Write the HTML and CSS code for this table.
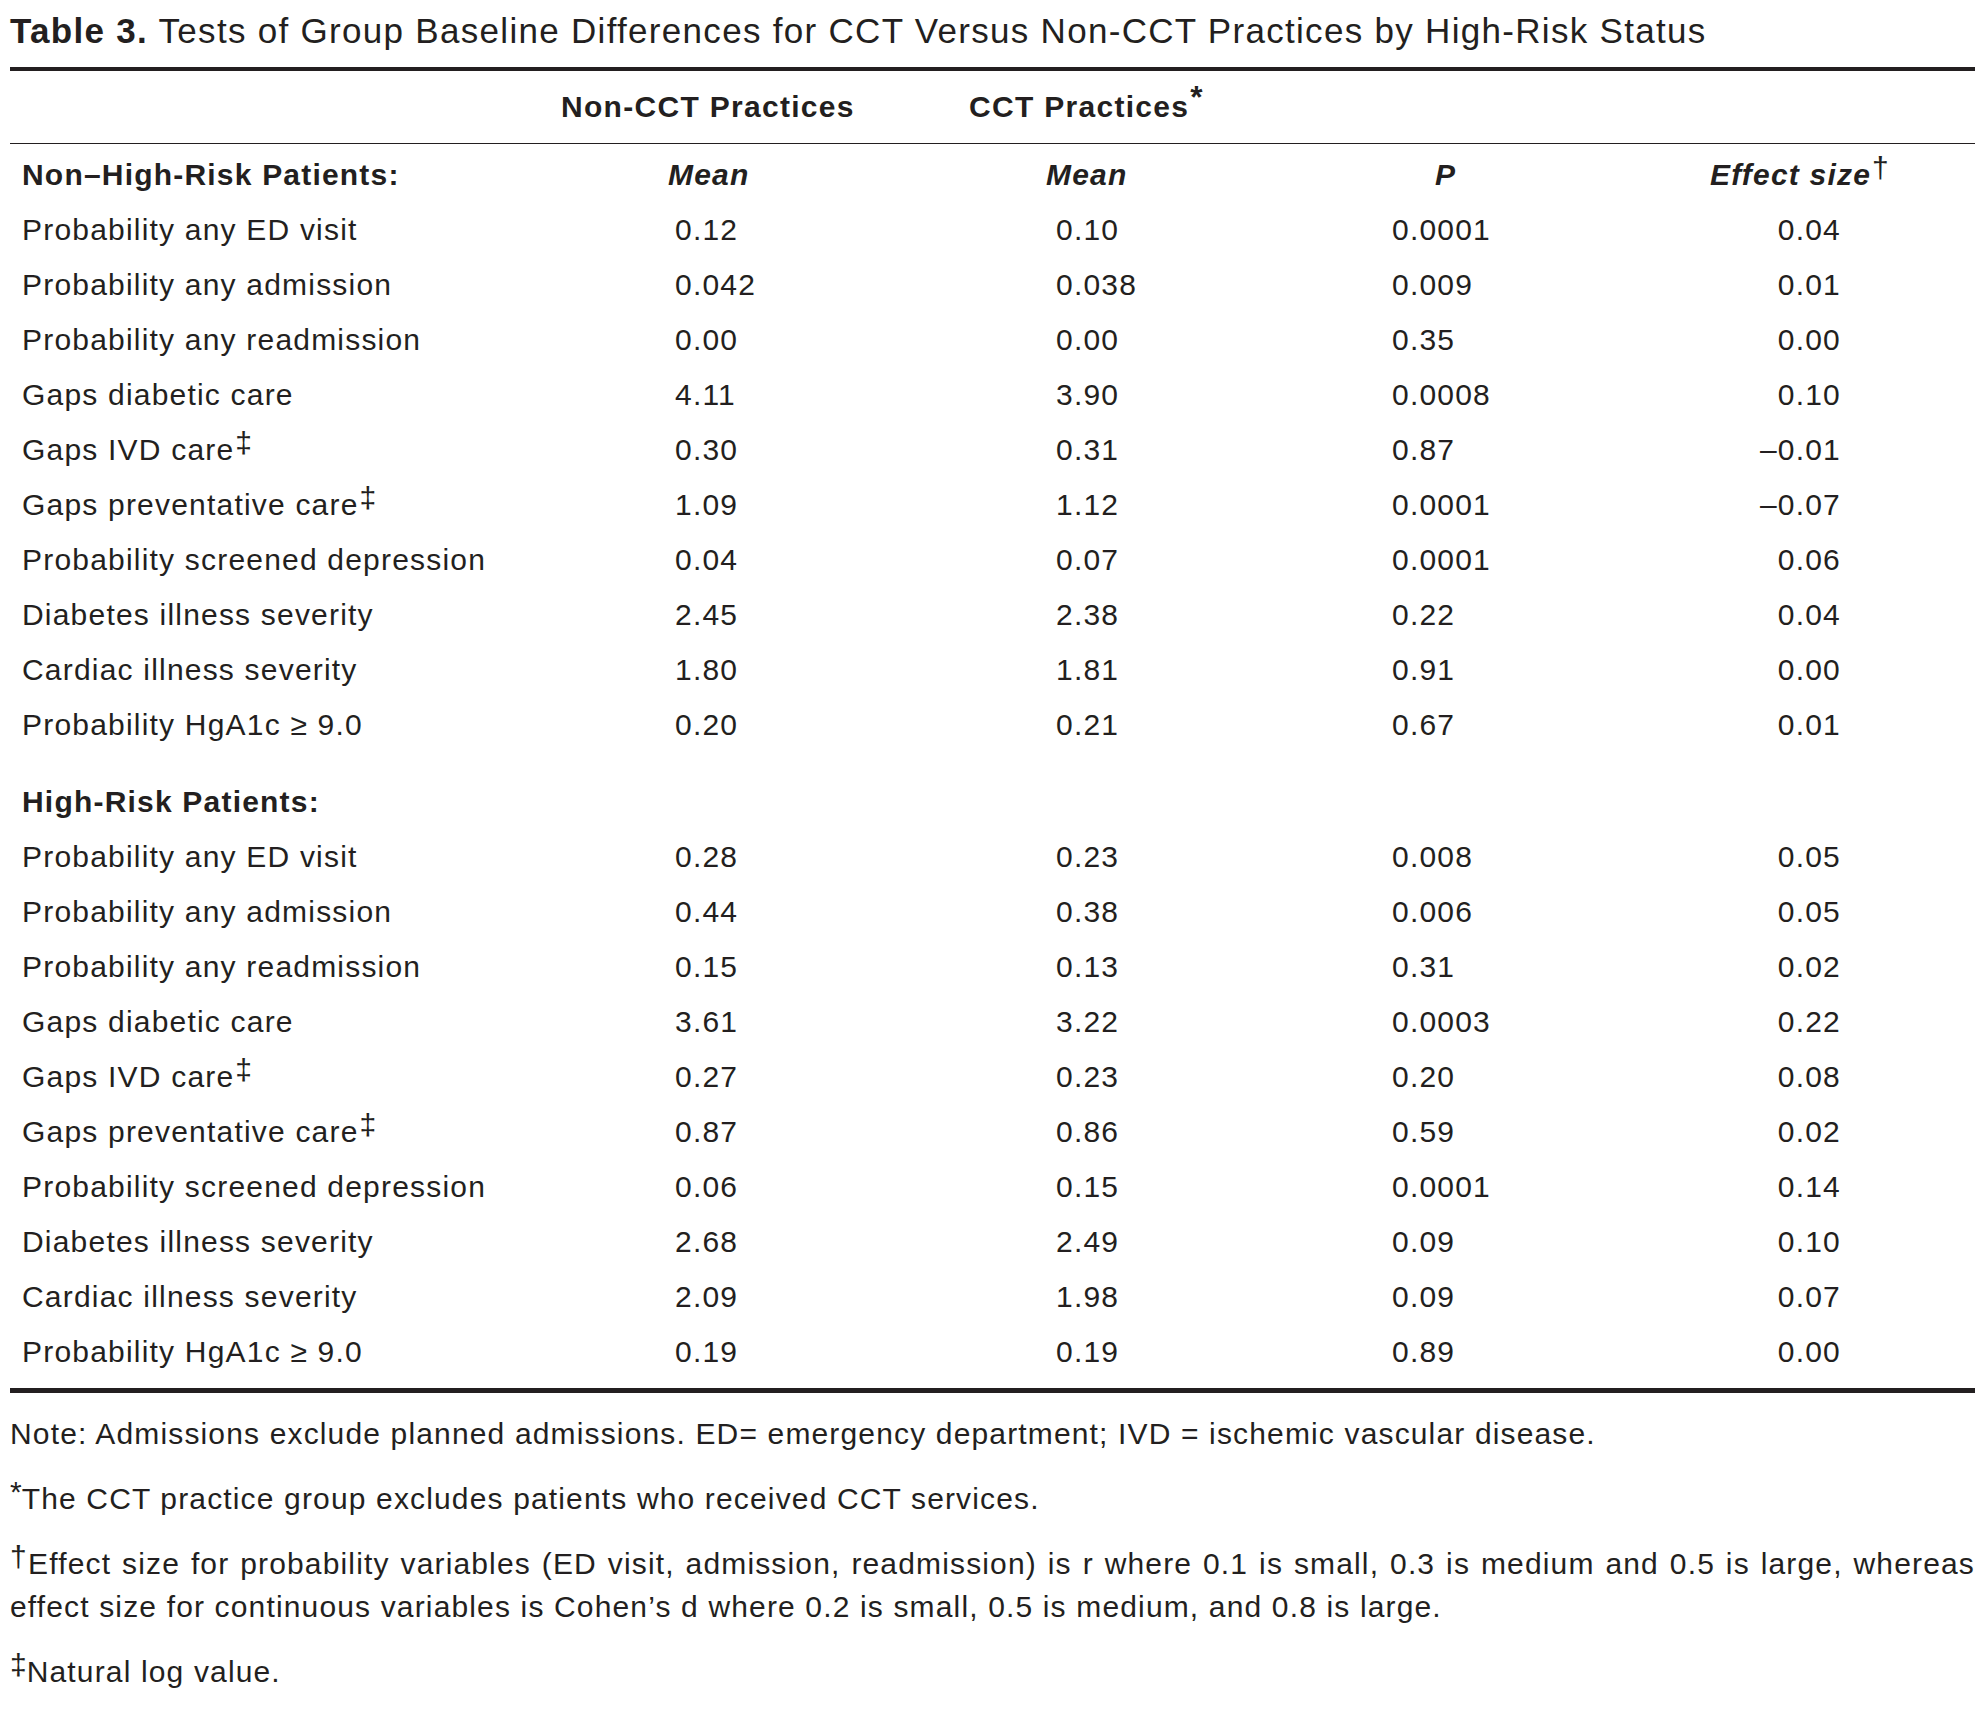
FILE: index.html
```html
<!DOCTYPE html>
<html lang="en">
<head>
<meta charset="utf-8">
<title>Table 3</title>
<link rel="stylesheet" href="styles.css">
</head>
<body>
<div class="page">
  <h1 class="title"><b>Table 3.</b> Tests of Group Baseline Differences for CCT Versus Non-CCT Practices by High-Risk Status</h1>
  <div class="rule-thick"></div>
  <div class="group-head">
    <span class="gh gh1">Non-CCT Practices</span>
    <span class="gh gh2">CCT Practices<span class="sup star">*</span></span>
  </div>
  <div class="rule-thin"></div>

  <div class="row colhead">
    <span class="label sect">Non–High-Risk Patients:</span>
    <span class="h h1">Mean</span>
    <span class="h h2">Mean</span>
    <span class="h h3">P</span>
    <span class="h h4">Effect size<span class="sup dag">†</span></span>
  </div>
  <div class="row"><span class="label">Probability any ED visit</span><span class="v">0.12</span><span class="v">0.10</span><span class="v">0.0001</span><span class="e">0.04</span></div>
  <div class="row"><span class="label">Probability any admission</span><span class="v">0.042</span><span class="v">0.038</span><span class="v">0.009</span><span class="e">0.01</span></div>
  <div class="row"><span class="label">Probability any readmission</span><span class="v">0.00</span><span class="v">0.00</span><span class="v">0.35</span><span class="e">0.00</span></div>
  <div class="row"><span class="label">Gaps diabetic care</span><span class="v">4.11</span><span class="v">3.90</span><span class="v">0.0008</span><span class="e">0.10</span></div>
  <div class="row"><span class="label">Gaps IVD care<span class="sup">‡</span></span><span class="v">0.30</span><span class="v">0.31</span><span class="v">0.87</span><span class="e">–0.01</span></div>
  <div class="row"><span class="label">Gaps preventative care<span class="sup">‡</span></span><span class="v">1.09</span><span class="v">1.12</span><span class="v">0.0001</span><span class="e">–0.07</span></div>
  <div class="row"><span class="label">Probability screened depression</span><span class="v">0.04</span><span class="v">0.07</span><span class="v">0.0001</span><span class="e">0.06</span></div>
  <div class="row"><span class="label">Diabetes illness severity</span><span class="v">2.45</span><span class="v">2.38</span><span class="v">0.22</span><span class="e">0.04</span></div>
  <div class="row"><span class="label">Cardiac illness severity</span><span class="v">1.80</span><span class="v">1.81</span><span class="v">0.91</span><span class="e">0.00</span></div>
  <div class="row"><span class="label">Probability HgA1c ≥ 9.0</span><span class="v">0.20</span><span class="v">0.21</span><span class="v">0.67</span><span class="e">0.01</span></div>

  <div class="row section2"><span class="label sect">High-Risk Patients:</span></div>
  <div class="row"><span class="label">Probability any ED visit</span><span class="v">0.28</span><span class="v">0.23</span><span class="v">0.008</span><span class="e">0.05</span></div>
  <div class="row"><span class="label">Probability any admission</span><span class="v">0.44</span><span class="v">0.38</span><span class="v">0.006</span><span class="e">0.05</span></div>
  <div class="row"><span class="label">Probability any readmission</span><span class="v">0.15</span><span class="v">0.13</span><span class="v">0.31</span><span class="e">0.02</span></div>
  <div class="row"><span class="label">Gaps diabetic care</span><span class="v">3.61</span><span class="v">3.22</span><span class="v">0.0003</span><span class="e">0.22</span></div>
  <div class="row"><span class="label">Gaps IVD care<span class="sup">‡</span></span><span class="v">0.27</span><span class="v">0.23</span><span class="v">0.20</span><span class="e">0.08</span></div>
  <div class="row"><span class="label">Gaps preventative care<span class="sup">‡</span></span><span class="v">0.87</span><span class="v">0.86</span><span class="v">0.59</span><span class="e">0.02</span></div>
  <div class="row"><span class="label">Probability screened depression</span><span class="v">0.06</span><span class="v">0.15</span><span class="v">0.0001</span><span class="e">0.14</span></div>
  <div class="row"><span class="label">Diabetes illness severity</span><span class="v">2.68</span><span class="v">2.49</span><span class="v">0.09</span><span class="e">0.10</span></div>
  <div class="row"><span class="label">Cardiac illness severity</span><span class="v">2.09</span><span class="v">1.98</span><span class="v">0.09</span><span class="e">0.07</span></div>
  <div class="row"><span class="label">Probability HgA1c ≥ 9.0</span><span class="v">0.19</span><span class="v">0.19</span><span class="v">0.89</span><span class="e">0.00</span></div>

  <div class="rule-thick bottom"></div>

  <div class="notes">
    <p>Note: Admissions exclude planned admissions. ED= emergency department; IVD = ischemic vascular disease.</p>
    <p><span class="nsup">*</span>The CCT practice group excludes patients who received CCT services.</p>
    <p><span class="jline"><span class="nsup">†</span>Effect size for probability variables (ED visit, admission, readmission) is r where 0.1 is small, 0.3 is medium and 0.5 is large, whereas</span>effect size for continuous variables is Cohen’s d where 0.2 is small, 0.5 is medium, and 0.8 is large.</p>
    <p><span class="nsup">‡</span>Natural log value.</p>
  </div>
</div>
</body>
</html>
```

FILE: styles.css
```css
html, body {
  margin: 0;
  padding: 0;
  background: #ffffff;
}

body {
  font-family: "Liberation Sans", Arial, Helvetica, sans-serif;
  color: #231f20;
}

.page {
  padding: 11px 0 0 10px;
}

.title {
  margin: 0 0 16px 0;
  font-size: 35px;
  letter-spacing: 1.3px;
  line-height: 40px;
  font-weight: normal;
  white-space: nowrap;
}

.title b {
  font-weight: bold;
}

.rule-thick {
  height: 4px;
  background: #231f20;
}

.rule-thick.bottom {
  margin-top: 9px;
  height: 5px;
}

.rule-thin {
  height: 1px;
  background: #231f20;
  margin-bottom: 3px;
}

.group-head {
  display: grid;
  grid-template-columns: 551px 408px auto;
  height: 72px;
  align-items: center;
  font-size: 30px;
  letter-spacing: 1.3px;
  font-weight: bold;
  line-height: 72px;
  white-space: nowrap;
}

.gh1 { grid-column: 2; }
.gh2 { grid-column: 3; }

.row {
  display: grid;
  grid-template-columns: 653px 381px 336px 308px 1fr;
  padding-left: 12px;
  height: 55px;
  line-height: 55px;
  font-size: 30px;
  letter-spacing: 1.2px;
  white-space: nowrap;
}

.sect {
  font-weight: bold;
}

.colhead .h {
  font-weight: bold;
  font-style: italic;
}

.h1 { margin-left: -7px; }
.h2 { margin-left: -10px; }
.h3 { padding-left: 43px; }
.h4 { padding-left: 10px; }

.v {
  text-align: left;
}

.e {
  text-align: right;
  padding-right: 134px;
}

.section2 {
  margin-top: 22px;
}

.sup {
  font-size: 1em;
  line-height: 0;
  vertical-align: 0.22em;
  font-weight: normal;
  font-style: normal;
  margin-left: 1px;
}

.sup.star {
  font-weight: bold;
  font-size: 1.05em;
  vertical-align: 0.3em;
}

.sup.dag {
  vertical-align: 0.25em;
}

.notes {
  padding-top: 19px;
  font-size: 30px;
  letter-spacing: 1.15px;
  line-height: 43px;
}

.notes p {
  margin: 0 0 22px 0;
  white-space: nowrap;
}

.notes .jline {
  display: block;
  white-space: normal;
  text-align: justify;
  text-align-last: justify;
}

.nsup {
  font-size: 1em;
  line-height: 0;
  vertical-align: 0.22em;
  letter-spacing: 0;
}
```
